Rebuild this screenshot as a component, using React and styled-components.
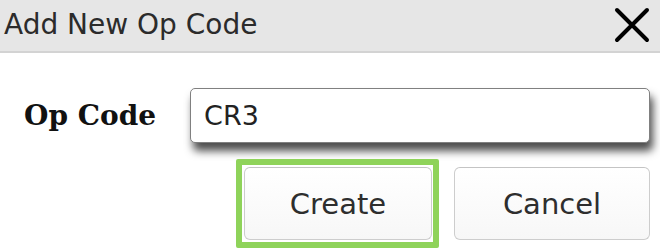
import React from "react";
import styled, { createGlobalStyle } from "styled-components";

const GlobalStyle = createGlobalStyle`
  html, body {
    margin: 0;
    padding: 0;
    background: #ffffff;
  }
  body {
    font-family: "DejaVu Sans", Verdana, sans-serif;
  }
`;

const Dialog = styled.div`
  width: 660px;
  height: 249px;
  overflow: hidden;
  display: flex;
  flex-direction: column;
  background: #ffffff;
`;

const TitleBar = styled.div`
  height: 51px;
  display: flex;
  align-items: center;
  justify-content: space-between;
  padding: 0 8px 0 4px;
  background: #e6e6e6;
  border-bottom: 2px solid #d3d3d3;
  box-sizing: content-box;
`;

const Title = styled.span`
  font-size: 28px;
  color: #2b2b2b;
  line-height: 1;
  padding-bottom: 2px;
`;

const CloseButton = styled.button`
  width: 40px;
  height: 40px;
  padding: 0;
  margin-top: -2px;
  border: none;
  background: transparent;
  display: flex;
  align-items: center;
  justify-content: center;
`;

const Body = styled.div`
  display: flex;
  flex-direction: column;
  padding: 35px 10px 0 24px;
`;

const FieldRow = styled.div`
  display: flex;
  align-items: center;
  gap: 34px;
`;

const Label = styled.label`
  font-family: "DejaVu Serif", "Liberation Serif", serif;
  font-weight: bold;
  font-size: 28px;
  color: #111;
  white-space: nowrap;
`;

const Input = styled.input`
  flex: 1;
  height: 55px;
  box-sizing: border-box;
  padding: 0 13px;
  font-family: "DejaVu Sans", Verdana, sans-serif;
  font-size: 27px;
  color: #222;
  border: 1px solid #808080;
  border-radius: 5px;
  background: #fff;
  box-shadow: 3px 8px 9px rgba(0, 0, 0, 0.7);
  outline: none;
`;

const Actions = styled.div`
  display: flex;
  justify-content: flex-end;
  align-items: center;
  gap: 15px;
  margin-top: 16px;
`;

const FocusRing = styled.span`
  display: flex;
  padding: 2px 1px 2px 2px;
  border: 6px solid #8fd35a;
  border-radius: 2px;
`;

const Button = styled.button`
  width: ${(p) => p.$width}px;
  height: 73px;
  font-family: "DejaVu Sans", Verdana, sans-serif;
  font-size: 29px;
  color: #2e2e2e;
  background: linear-gradient(#ffffff, #f7f7f7);
  border: 1px solid #cdcdcd;
  border-top-color: #c4c4c4;
  border-radius: 6px;
  outline: none;
`;

export default function App() {
  return (
    <>
      <GlobalStyle />
      <Dialog>
        <TitleBar>
          <Title>Add New Op Code</Title>
          <CloseButton aria-label="Close">
            <svg width="36" height="36" viewBox="0 0 36 36">
              <path
                d="M3 3 L33 33 M33 3 L3 33"
                stroke="#000"
                strokeWidth="4"
                strokeLinecap="round"
              />
            </svg>
          </CloseButton>
        </TitleBar>
        <Body>
          <FieldRow>
            <Label>Op Code</Label>
            <Input defaultValue="CR3" />
          </FieldRow>
          <Actions>
            <FocusRing>
              <Button $width={188}>Create</Button>
            </FocusRing>
            <Button $width={196}>Cancel</Button>
          </Actions>
        </Body>
      </Dialog>
    </>
  );
}
